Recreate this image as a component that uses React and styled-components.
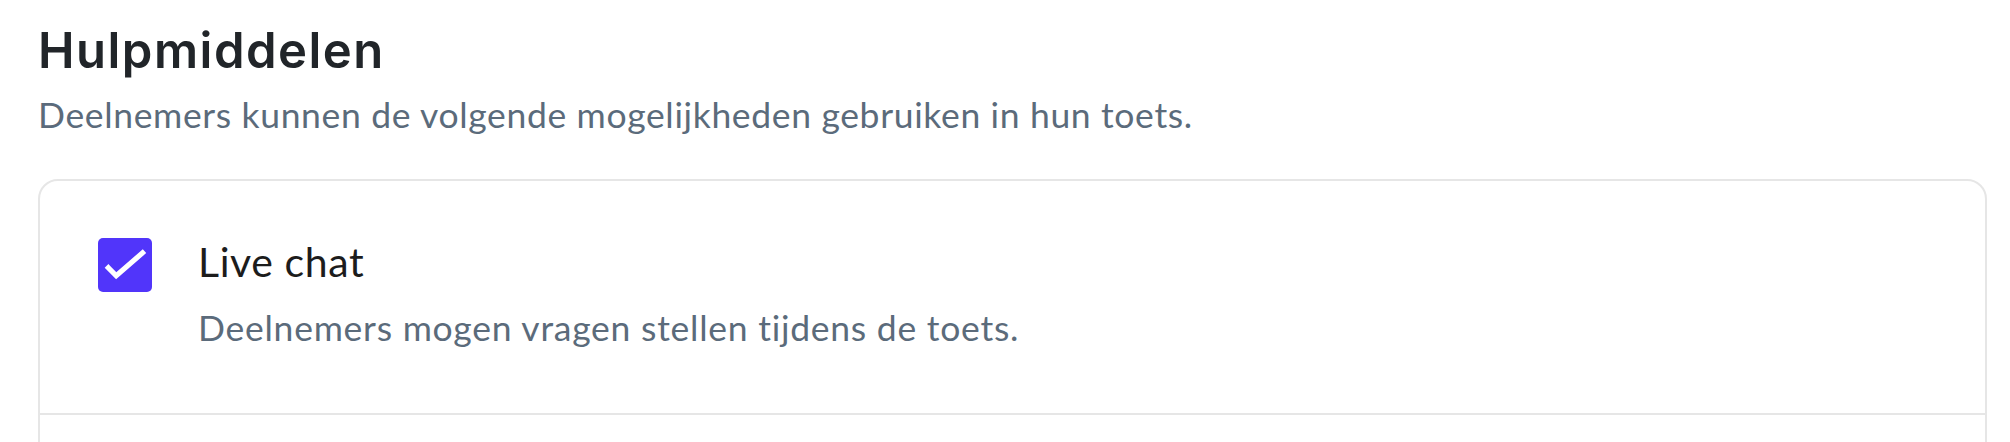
import React from "react";
import styled, { createGlobalStyle } from "styled-components";

const GlobalStyle = createGlobalStyle`
  html, body {
    margin: 0;
    padding: 0;
    background: #ffffff;
  }
  body {
    font-family: "Lato", "Liberation Sans", sans-serif;
  }
`;

const Page = styled.div`
  padding: 22px 23px 0 38px;
`;

const Title = styled.h2`
  margin: 0;
  font-family: "Inter", "Liberation Sans", sans-serif;
  font-weight: 600;
  font-size: 49px;
  line-height: 58px;
  letter-spacing: 1.5px;
  color: #212529;
`;

const Intro = styled.p`
  margin: 11px 0 0;
  font-size: 35.5px;
  line-height: 48px;
  letter-spacing: 0.65px;
  color: #5b6b7b;
`;

const Card = styled.div`
  margin-top: 40px;
  border: 2px solid #e6e6e6;
  border-radius: 20px;
`;

const Option = styled.label`
  display: flex;
  align-items: flex-start;
  gap: 46px;
  padding: ${(props) => (props.first ? "57px" : "58px")} 58px 61px;
  border-top: ${(props) => (props.first ? "none" : "2px solid #e6e6e6")};
  min-height: ${(props) => props.minHeight || "auto"};
  cursor: pointer;
`;

const Box = styled.span`
  flex: none;
  display: flex;
  align-items: center;
  justify-content: center;
  width: 54px;
  height: 54px;
  border-radius: 5px;
  background: ${(props) => (props.checked ? "#5135fa" : "#ffffff")};
`;

const Text = styled.div`
  display: flex;
  flex-direction: column;
`;

const Label = styled.span`
  font-size: 41px;
  line-height: 48px;
  letter-spacing: 0.6px;
  color: #1c1c1c;
`;

const Description = styled.span`
  margin-top: 18px;
  font-size: 35.5px;
  line-height: 48px;
  letter-spacing: 0.75px;
  color: #5b6b7b;
`;

const Check = () => (
  <svg width="54" height="54" viewBox="0 0 24 24" fill="none">
    <path
      d="M4.6 13.2 L8.1 16.8 L19.8 6.6"
      stroke="#ffffff"
      strokeWidth="2.3"
      strokeLinecap="square"
      strokeLinejoin="miter"
    />
  </svg>
);

const App = () => {
  return (
    <Page>
      <GlobalStyle />
      <Title>Hulpmiddelen</Title>
      <Intro>Deelnemers kunnen de volgende mogelijkheden gebruiken in hun toets.</Intro>
      <Card>
        <Option first>
          <Box checked>
            <Check />
          </Box>
          <Text>
            <Label>Live chat</Label>
            <Description>Deelnemers mogen vragen stellen tijdens de toets.</Description>
          </Text>
        </Option>
        <Option minHeight="120px" />
      </Card>
    </Page>
  );
};

export default App;
